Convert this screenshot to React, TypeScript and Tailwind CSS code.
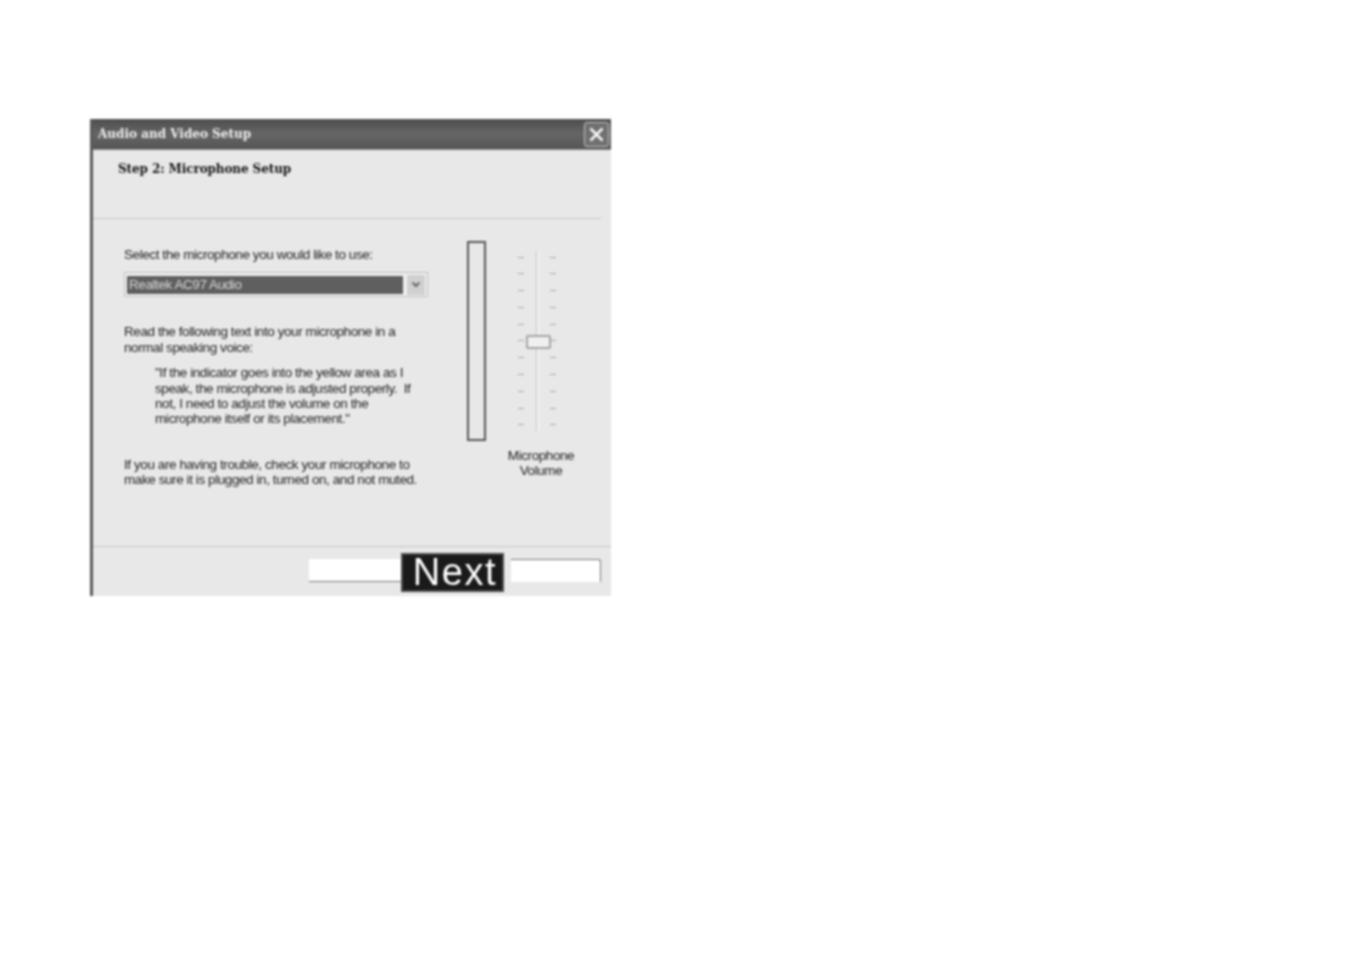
const ticks = [0, 1, 2, 3, 4, 5, 6, 7, 8, 9, 10];

function TickColumn() {
  return (
    <div className="flex h-[169px] w-[6px] flex-col justify-between">
      {ticks.map((t) => (
        <div key={t} className="h-px w-[6px] bg-[#a8a8a8]" />
      ))}
    </div>
  );
}

export default function App() {
  return (
    <div className="min-h-[954px] bg-white pl-[90px] pt-[119px] font-['Liberation_Sans',Arial,sans-serif]">
      <div className="flex h-[477px] w-[521px] flex-col overflow-hidden border-l-[3px] border-[#5a5a5a] bg-[#e8e8e8] blur-[0.8px]">
        {/* title bar */}
        <div className="-ml-[3px] flex h-[31px] shrink-0 items-center justify-between border-b border-[#8a8a8a] bg-gradient-to-b from-[#4e4e4e] via-[#666666] to-[#555555] pl-[8px] pr-[2px]">
          <span className="font-['DejaVu_Serif',serif] text-[12px] font-bold text-[#eeeeee]">
            Audio and Video Setup
          </span>
          <button className="flex h-[25px] w-[25px] items-center justify-center rounded-[3px] border border-[#c4c4c4] bg-[#707070]">
            <svg width="17" height="17" viewBox="0 0 17 17">
              <path d="M2.5 2.5 14.5 14.5M14.5 2.5 2.5 14.5" stroke="#f4f4f4" strokeWidth="2.6" />
            </svg>
          </button>
        </div>

        {/* step heading */}
        <div className="mr-[10px] h-[69px] shrink-0 border-b border-[#c6c6c6] pl-[25px] pt-[10px]">
          <h1 className="font-['DejaVu_Serif',serif] text-[12px] font-bold leading-[18px] tracking-[-0.1px] text-[#151515]">
            Step 2: Microphone Setup
          </h1>
        </div>

        {/* body */}
        <div className="flex h-[328px] shrink-0 border-b border-[#c6c6c6] pt-[22px] text-[13.5px] leading-[15.4px] tracking-[-0.42px] text-[#222222]">
          <div className="ml-[31px] w-[343px]">
            <p className="mt-[6px]">Select the microphone you would like to use:</p>
            <div className="mt-[10px] flex h-[25px] w-[304px] items-center border border-[#bdbdbd] bg-[#efefef] pl-[2px] pr-[2px]">
              <div className="flex h-[18px] w-[278px] items-center bg-[#5f5f5f] pl-[2px] text-[#d8d8d8]">
                Realtek AC97 Audio
              </div>
              <div className="ml-[4px] flex h-[20px] w-[18px] items-center justify-center bg-[#d0d0d0]">
                <svg width="10" height="8" viewBox="0 0 10 8">
                  <path d="M1.5 1.5 5 5l3.5-3.5" fill="none" stroke="#666666" strokeWidth="2" />
                </svg>
              </div>
            </div>
            <p className="mt-[27px]">
              Read the following text into your microphone in a
              <br />
              normal speaking voice:
            </p>
            <p className="ml-[31px] mt-[10px] whitespace-pre">
              {'"If the indicator goes into the yellow area as I\nspeak, the microphone is adjusted properly.  If\nnot, I need to adjust the volume on the\nmicrophone itself or its placement."'}
            </p>
            <p className="mt-[30px]">
              If you are having trouble, check your microphone to
              <br />
              make sure it is plugged in, turned on, and not muted.
            </p>
          </div>

          {/* level meter */}
          <div className="h-[200px] w-[19px] shrink-0 border-2 border-[#555555] bg-[#e8e8e8]" />

          {/* volume slider */}
          <div className="ml-[19px] flex w-[72px] flex-col items-center">
            <div className="relative ml-[13px] mt-[10px] flex h-[180px] w-[38px] items-center justify-between self-start">
              <TickColumn />
              <div className="h-full w-[3px] border-l border-[#c0c0c0] bg-[#f4f4f4]" />
              <TickColumn />
              <div className="absolute left-[8px] top-[84px] h-[14px] w-[25px] rounded-[2px] border-2 border-[#a4a4a4] bg-[#f0f0f0]" />
            </div>
            <p className="mt-[17px] text-center">
              Microphone
              <br />
              Volume
            </p>
          </div>
        </div>

        {/* buttons */}
        <div className="relative flex h-[49px] shrink-0 items-start pl-[216px]">
          <div className="mt-[12px] h-[23px] w-[92px] border-b border-[#777777] bg-white" />
          <div className="mt-[6px] flex h-[39px] w-[103px] items-center justify-center border-2 border-[#4a4a4a] bg-[#1a1a1a] pb-[2px] pl-[5px] text-[38px] font-normal leading-none tracking-[1.6px] text-white">
            Next
          </div>
          <div className="ml-[7px] mt-[12px] h-[23px] w-[90px] rounded-tr-[3px] border-r border-t border-[#777777] bg-white" />
        </div>
      </div>
    </div>
  );
}
